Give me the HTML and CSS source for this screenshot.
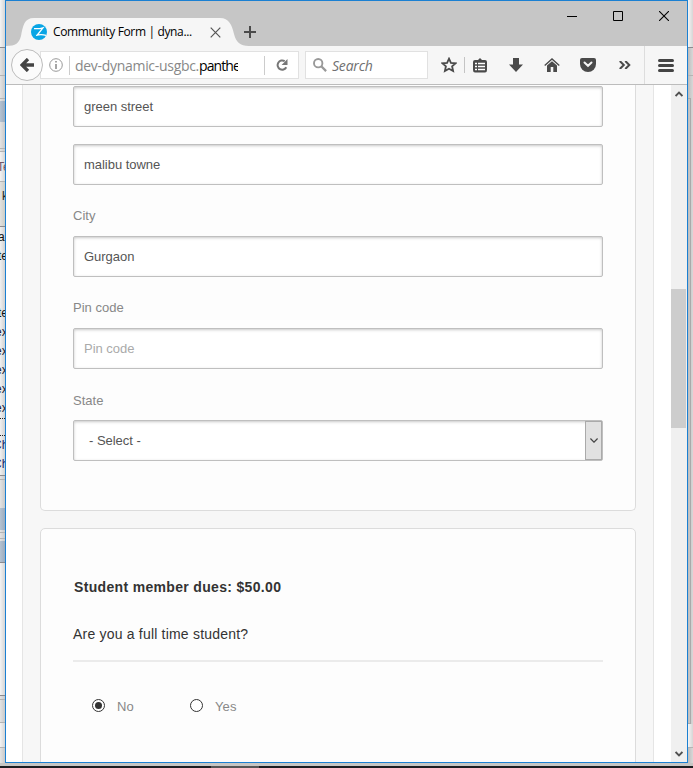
FILE: index.html
```html
<!DOCTYPE html>
<html lang="en">
<head>
<meta charset="utf-8">
<title>Community Form | dynamic</title>
<link rel="stylesheet" href="styles.css">
</head>
<body>
<div class="desktop">
  <div class="behind behind-left">
    <i class="h47 light"></i><i class="line"></i><i class="h27"></i><i class="line soft"></i><i class="h22"></i><i class="line soft"></i><i class="h2"></i>
    <i class="h21 blue"></i><i class="h26"></i><i class="line soft"></i><i class="h2"></i><i class="line soft"></i>
    <i class="h29 light plum">Te</i><i class="line soft"></i><i class="h44 cream"><b>k</b></i><i class="line"></i>
    <i class="list"><s>a</s><s>te</s><s></s><s></s><s>te</s><s class="ex">ex</s><s class="ex">ex</s><s class="ex">ex</s><s class="ex">ex</s><s class="ex">ex</s><s class="dots"></s><s class="navy">Ch</s><s class="navy">Ch</s></i>
    <i class="line"></i><i class="h3"></i><i class="line soft"></i><i class="h28"></i><i class="h22 blue"></i><i class="h2"></i><i class="line soft"></i><i class="h5"></i><i class="line soft"></i><i class="h2"></i><i class="h21 blue"></i><i class="line"></i>
    <i class="h132 light"></i><i class="line"></i><i class="h3"></i><i class="line soft"></i><i class="h22"></i><i class="line soft"></i><i class="h24 light"></i><i class="line soft"></i>
  </div>

  <div class="window">
    <header class="titlebar">
      <div class="tab">
        <svg class="tab-shape" width="243" height="28" viewBox="0 0 243 28"><path d="M0 28C10 28 13 25 15 18C17 8 18 0 28 0H214C223 0 226 7 228 16C230 24 234 28 243 28Z" fill="#f6f6f6"/></svg>
        <svg class="favicon" width="16" height="16" viewBox="0 0 16 16"><circle cx="8" cy="8" r="8" fill="#08a5e5"/><path d="M3 4.600Q8 5 12 3.800L6.300 11M5 11.300Q10 9.800 15 11.300" fill="none" stroke="#fff" stroke-width="1.300"/></svg>
        <span class="tab-title">Community Form | dyna...</span>
        <svg class="tab-close" width="11" height="11" viewBox="0 0 11 11"><path d="M.7.7l9.6 9.6M10.3.7L.7 10.3" stroke="#555" stroke-width="1.2"/></svg>
      </div>
      <svg class="new-tab" width="12" height="12" viewBox="0 0 12 12"><path d="M6 0v12M0 6h12" stroke="#4a4a4a" stroke-width="2"/></svg>
      <div class="controls">
        <svg width="10" height="10" viewBox="0 0 10 10"><path d="M0 5.5h10" stroke="#000"/></svg>
        <svg width="10" height="10" viewBox="0 0 10 10"><path d="M.5.5h9v9h-9z" fill="none" stroke="#000"/></svg>
        <svg width="10" height="10" viewBox="0 0 10 10"><path d="M0 0l10 10M10 0L0 10" stroke="#000" stroke-width="1.1"/></svg>
      </div>
    </header>

    <div class="toolbar">
      <div class="back"><svg width="14" height="14" viewBox="0 0 14 14"><path d="M8 1L2 7l6 6M2.5 7H14" fill="none" stroke="#444" stroke-width="3.3"/></svg></div>
      <div class="url">
        <svg class="info" width="14" height="14" viewBox="0 0 14 14"><circle cx="7" cy="7" r="6.3" fill="none" stroke="#999"/><path d="M7 3v1.6M7 6v5" stroke="#888" stroke-width="1.5"/></svg>
        <div class="address">dev-dynamic-usgbc.<span>pantheonsite.io</span></div>
        <div class="reload"><svg width="12" height="12" viewBox="0 0 12 12"><path d="M8.7 2.2A4.6 4.6 0 1 0 10.3 8.2" fill="none" stroke="#777" stroke-width="2"/><path d="M11.5 0v6H5.6z" fill="#777"/></svg></div>
      </div>
      <div class="search">
        <svg width="14" height="14" viewBox="0 0 14 14"><circle cx="5.2" cy="5.2" r="4.2" fill="none" stroke="#999" stroke-width="1.9"/><path d="M8.3 8.3l4.8 4.8" stroke="#999" stroke-width="2.3"/></svg>
        <span>Search</span>
      </div>
      <div class="tools">
        <svg width="16" height="16" viewBox="0 0 16 16"><path d="M8 1.7l1.9 4.1 4.6.5-3.4 3 1 4.7L8 11.7 3.9 14l1-4.7-3.4-3 4.6-.5z" fill="none" stroke="#4a4a4a" stroke-width="1.8"/></svg>
        <div class="divider"></div>
        <svg class="clip" width="14" height="15" viewBox="0 0 14 15"><path d="M2 2h3l2-2 2 2h3q2 0 2 2v8q0 2.500-2 2.500H2Q0 14.500 0 12V4q0-2 2-2z" fill="#4a4a4a"/><path d="M2 5.500h2M5 5.500h7M2 8.500h2M5 8.500h7M2 11.500h2M5 11.500h7" stroke="#fff" stroke-width="1.500"/></svg>
        <svg class="down" width="14" height="14" viewBox="0 0 14 14"><path d="M4 0h6v6.500h4L7 14 0 6.500h4z" fill="#4a4a4a"/></svg>
        <svg class="home" width="16" height="14" viewBox="0 0 16 14"><path d="M.7 7.500L8 1l7.300 6.500" fill="none" stroke="#4a4a4a" stroke-width="1.400"/><path d="M3 7.500l5-4.300 5 4.300V14H9.300V9H6.700v5H3z" fill="#4a4a4a"/></svg>
        <svg class="pocket" width="16" height="14" viewBox="0 0 16 14"><path d="M2 0h12q2 0 2 2v4a8 8 0 0 1-16 0V2Q0 0 2 0z" fill="#4a4a4a"/><path d="M4.500 4.500L8 7.800l3.500-3.300" fill="none" stroke="#f6f6f6" stroke-width="2" stroke-linecap="round"/></svg>
        <svg class="more" width="12" height="8" viewBox="0 0 12 8"><path d="M.8 0l4 4-4 4M6.300 0l4 4-4 4" fill="none" stroke="#4a4a4a" stroke-width="2"/></svg>
        <div class="menu"><svg width="16" height="13" viewBox="0 0 16 13"><path d="M1.500 1.500h13M1.500 6.500h13M1.500 11.500h13" stroke="#444" stroke-width="3" stroke-linecap="round"/></svg></div>
      </div>
    </div>

    <div class="viewport">
      <main class="page">
        <section class="card address-card">
          <div class="field">green street</div>
          <div class="field second">malibu towne</div>
          <label>City</label>
          <div class="field">Gurgaon</div>
          <label>Pin code</label>
          <div class="field placeholder">Pin code</div>
          <label class="state">State</label>
          <div class="field select">- Select -<div class="drop"><svg width="8" height="5" viewBox="0 0 8 5"><path d="M.4.5L4 4.200 7.600.5" fill="none" stroke="#444" stroke-width="1.200"/></svg></div></div>
        </section>
        <section class="card dues-card">
          <h2>Student member dues: $50.00</h2>
          <p>Are you a full time student?</p>
          <div class="choices">
            <div class="choice"><span class="radio checked"></span><span class="choice-text">No</span></div>
            <div class="choice"><span class="radio"></span><span class="choice-text">Yes</span></div>
          </div>
        </section>
      </main>
      <div class="scrollbar">
        <svg width="8" height="6" viewBox="0 0 8 6"><path d="M.6 5L4 1.600 7.400 5" fill="none" stroke="#505050" stroke-width="1.800"/></svg>
        <div class="thumb"></div>
        <svg class="bottom" width="8" height="6" viewBox="0 0 8 6"><path d="M.6 1L4 4.400 7.400 1" fill="none" stroke="#505050" stroke-width="1.800"/></svg>
      </div>
    </div>
  </div>

  <div class="behind behind-right">
    <i class="h47 light"></i><i class="line"></i><i class="h27"></i><i class="line soft"></i><i class="h22"></i><i class="panel"></i><i class="h23 light"></i><i class="line soft"></i><i class="h14"></i>
  </div>
  <div class="taskbar"><i></i></div>
</div>
</body>
</html>
```
FILE: styles.css
```css
* { box-sizing: border-box; }
body { margin: 0; font-family: "Liberation Sans", Arial, sans-serif; }
svg { display: block; flex: none; }

.desktop {
  display: grid;
  grid-template: 763px 5px / 5px 683px 5px;
  width: 693px;
  height: 768px;
  overflow: hidden;
  background: #c6c6c4;
}

/* Slivers of the windows underneath */
.behind { display: flex; flex-direction: column; overflow: hidden; background: linear-gradient(90deg, #e4e4e4, #c9c9c9); }
.behind i { display: block; flex: none; font-style: normal; font-size: 12px; white-space: nowrap; overflow: hidden; }
.behind .line { height: 1px; background: #8b8b8f; }
.behind .soft { background: #b4b4b4; }
.h2 { height: 2px; } .h3 { height: 3px; } .h5 { height: 5px; } .h14 { height: 14px; }
.h21 { height: 21px; } .h22 { height: 22px; } .h23 { height: 23px; } .h24 { height: 24px; }
.h26 { height: 26px; } .h27 { height: 27px; } .h28 { height: 28px; } .h29 { height: 29px; }
.h44 { height: 44px; } .h47 { height: 47px; } .h132 { height: 132px; }
.light { background: linear-gradient(90deg, #f4f4f4, #d6d6d6); }
.blue { background: linear-gradient(90deg, #b5c3d2, #9cabbd); }
.cream { background: linear-gradient(90deg, #e2e2e0, #cdcdc6); }
.cream b { display: block; padding: 6px 0 0 2px; font-weight: 400; line-height: 16px; color: #222; }
.plum { color: #765766; line-height: 30px; text-indent: -3px; }
.behind .list { height: 248px; padding-top: 1px; background: linear-gradient(90deg, #f1f1f1, #d2d2d2); }
.list s { display: block; height: 19px; line-height: 19px; text-decoration: none; text-indent: -2px; color: #111; }
.list .ex { text-indent: -5px; color: #1a1a3a; }
.list .dots { height: 18px; border-top: 1px dotted #222; border-bottom: 1px dotted #222; }
.list .navy { color: #17256b; text-indent: -7px; }
.behind-right { background: linear-gradient(90deg, #bdbdbd, #d8d8d8); }
.behind .panel { height: 626px; width: 3px; border: solid #aaa; border-width: 1px 1px 1px 0; }
.taskbar { grid-column: 1 / 4; padding-top: 3px; background: linear-gradient(#c6c6c4 3px, #1c1d20 3px); }
.taskbar i { display: block; height: 2px; width: 48px; margin-left: 211px; background: #555; }

/* Window frame */
.window { display: flex; flex-direction: column; border: 1px solid #1b80d2; overflow: hidden; background: #fff; }
.titlebar { display: flex; flex: none; height: 45px; background: #c6c6c6; }
.tab { position: relative; display: flex; align-items: center; width: 234px; height: 28px; margin-top: 17px; padding-left: 25px; }
.tab-shape { position: absolute; left: 0; top: 0; }
.favicon, .tab-title, .tab-close { position: relative; }
.tab-title { width: 139px; margin-left: 6px; font: 12px/18px "Open Sans", "Noto Sans", sans-serif; letter-spacing: -.35px; white-space: nowrap; color: #000; }
.tab-close { margin-left: 18px; }
.new-tab { margin: 25px 0 0 4px; }
.controls { display: flex; gap: 36px; margin: 10px 18px 0 auto; }

.toolbar { display: flex; flex: none; align-items: center; height: 39px; border-bottom: 1px solid #bcbcbc; background: #f6f6f6; }
.back { position: relative; z-index: 1; display: grid; place-items: center; flex: none; width: 32px; height: 32px; margin-left: 5px; border: 1px solid #bcbcbc; border-radius: 50%; background: #fbfbfb; }
.url { display: flex; align-items: center; width: 259px; height: 28px; margin-left: -3px; padding-left: 8px; border: 1px solid #e1e1e1; background: #fff; }
.address { height: 19px; width: 170px; margin-left: 6px; padding-left: 5px; border-left: 1px solid #ccc; font: 14px/20px "Open Sans", "Noto Sans", sans-serif; letter-spacing: -.3px; white-space: nowrap; overflow: hidden; color: #888; }
.address span { letter-spacing: -.9px; color: #000; }
.reload { display: grid; place-items: center; width: 34px; height: 19px; margin-left: 26px; border-left: 1px solid #ccc; }
.search { display: flex; align-items: center; width: 123px; height: 28px; margin-left: 6px; padding-left: 7px; border: 1px solid #e1e1e1; background: #fff; }
.search span { margin: 2px 0 0 5px; font: italic 14px/20px "Open Sans", "Noto Sans", sans-serif; letter-spacing: -.2px; color: #707070; }
.tools { display: flex; align-items: center; height: 38px; margin-left: 13px; }
.divider { width: 1px; height: 16px; margin-left: 7px; background: #c4c4c4; }
.clip { margin-left: 8px; }
.down { margin-left: 22px; }
.home { margin-left: 21px; }
.pocket { margin-left: 20px; }
.more { margin-left: 23px; }
.menu { display: grid; place-items: center; width: 42px; height: 38px; margin-left: 13px; border-left: 1px solid #ddd; }

/* Page */
.viewport { display: flex; flex: 1; min-height: 0; }
.page { width: 632px; margin: 0 17px 0 16px; padding: 0 17px; border: solid #e5e5e5; border-width: 0 1px; background: #f7f7f7; }
.card { width: 596px; border: 1px solid #dcdcdc; border-radius: 5px; background: #fdfdfd; }
.address-card { height: 426px; padding: 1px 32px 0; border-top: 0; border-radius: 0 0 5px 5px; }
.field { display: flex; align-items: center; height: 41px; padding: 0 10px; border: 1px solid #bfbfbf; border-radius: 2px; background: #fff; box-shadow: inset 0 1px 3px rgba(0, 0, 0, .22); font-size: 13px; letter-spacing: -.03px; color: #555; }
.second { margin-top: 17px; }
label { display: block; height: 51px; padding-top: 22px; font-size: 13px; line-height: 18px; letter-spacing: .03px; color: #888; }
label.state { padding-top: 23px; }
.placeholder { color: #aaa; }
.select { padding: 0 0 0 15px; }
.drop { display: grid; place-items: center; width: 17px; height: 39px; margin-left: auto; border: 1px solid #aaa; background: #e1e1e1; }
.dues-card { height: 240px; margin-top: 17px; padding: 48px 32px 0; }
h2 { margin: 0; padding-left: 1px; font-size: 14px; line-height: 20px; letter-spacing: .33px; color: #333; }
p { height: 38px; margin: 27px 0 0; border-bottom: 2px solid #ebebeb; font-size: 14px; line-height: 20px; letter-spacing: .2px; color: #333; }
.choices { display: flex; margin: 34px 0 0 19px; }
.choice { display: flex; align-items: center; width: 98px; height: 18px; font-size: 13px; letter-spacing: .1px; color: #888; }
.choice-text { padding-top: 2px; }
.radio { display: grid; place-items: center; width: 13px; height: 13px; margin-right: 12px; border: 1px solid #333; border-radius: 50%; background: #fff; }
.checked::after { content: ""; width: 7px; height: 7px; border-radius: 50%; background: #333; }
.scrollbar { display: flex; flex-direction: column; align-items: center; width: 16px; padding: 6px 0 5px; background: #f0f0f0; }
.thumb { width: 15px; height: 139px; margin: 192px 1px 0 0; background: #cdcdcd; }
.bottom { margin-top: auto; }
```
